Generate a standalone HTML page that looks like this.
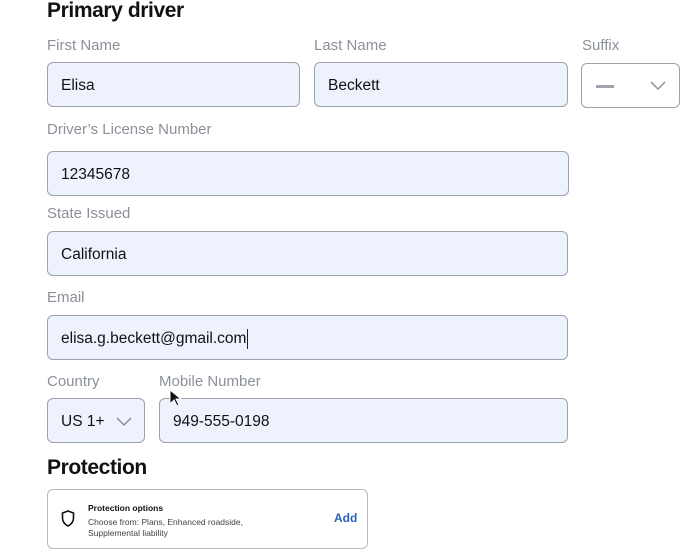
<!DOCTYPE html>
<html><head><style>
body{margin:0;width:700px;height:555px;background:#fff;font-family:"Liberation Sans",Arial,sans-serif;position:relative;overflow:hidden}
.a{position:absolute}
h{position:absolute;font-size:21px;font-weight:bold;color:#111;letter-spacing:-0.4px}
.l{position:absolute;font-size:15px;color:#8b9099}
.i{position:absolute;box-sizing:border-box;background:#edf2fc;border:1.5px solid #9da2ab;border-radius:6px;font-size:15.5px;color:#111;padding-left:13px;display:flex;align-items:center;padding-top:2px}
</style></head><body>
<h style="left:47px;top:-1px">Primary driver</h>
<div class="l" style="left:47px;top:37px">First Name</div>
<div class="l" style="left:314px;top:37px">Last Name</div>
<div class="l" style="left:582px;top:37px">Suffix</div>
<div class="i" style="left:47px;top:62px;width:253px;height:45px">Elisa</div>
<div class="i" style="left:314px;top:62px;width:254px;height:45px">Beckett</div>
<div class="i" style="left:581px;top:63px;width:99px;height:45px;background:#fff">
<div class="a" style="left:14px;top:21px;width:18px;height:2.5px;background:#a0a4ab"></div>
<svg class="a" style="left:68px;top:17px" width="16" height="10" viewBox="0 0 16 10"><path d="M1 1l7 7 7-7" fill="none" stroke="#8a8f98" stroke-width="1.5"/></svg></div>
<div class="l" style="left:47px;top:121px">Driver’s License Number</div>
<div class="i" style="left:47px;top:151px;width:522px;height:45px">12345678</div>
<div class="l" style="left:47px;top:205px">State Issued</div>
<div class="i" style="left:47px;top:231px;width:521px;height:45px">California</div>
<div class="l" style="left:47px;top:289px">Email</div>
<div class="i" style="left:47px;top:315px;width:521px;height:45px">elisa.g.beckett@gmail.com<span style="display:inline-block;width:1px;height:20px;background:#222;margin-left:1px"></span></div>
<div class="l" style="left:47px;top:373px">Country</div>
<div class="l" style="left:159px;top:373px">Mobile Number</div>
<div class="i" style="left:47px;top:398px;width:98px;height:45px">US 1+
<svg class="a" style="left:68px;top:18px" width="16" height="10" viewBox="0 0 16 10"><path d="M1 1l7 7 7-7" fill="none" stroke="#8a8f98" stroke-width="1.5"/></svg></div>
<div class="i" style="left:159px;top:398px;width:409px;height:45px">949-555-0198</div>
<svg class="a" style="left:169px;top:389px" width="12" height="18" viewBox="0 0 12 18"><path d="M1 1v14l4-4 3 6 2-1-3-6h5z" fill="#111" stroke="#fff" stroke-width="1"/></svg>
<h style="left:47px;top:456px">Protection</h>
<div class="a" style="left:47px;top:489px;width:321px;height:60px;box-sizing:border-box;border:1.5px solid #b5b9c0;border-radius:6px;background:#fff">
<svg class="a" style="left:13px;top:20px" width="14" height="17" viewBox="0 0 14 17"><path d="M7 1L1.5 3v5c0 4 2.5 6.5 5.5 8 3-1.5 5.5-4 5.5-8V3z" fill="none" stroke="#111" stroke-width="1.6"/></svg>
<div class="a" style="left:40px;top:13px;font-size:8.5px;font-weight:bold;color:#111">Protection options</div>
<div class="a" style="left:40px;top:27px;font-size:8.5px;color:#444;line-height:11px">Choose from: Plans, Enhanced roadside,<br>Supplemental liability</div>
<div class="a" style="left:286px;top:21px;font-size:12px;font-weight:bold;color:#2a62b8">Add</div>
</div>
</body></html>
